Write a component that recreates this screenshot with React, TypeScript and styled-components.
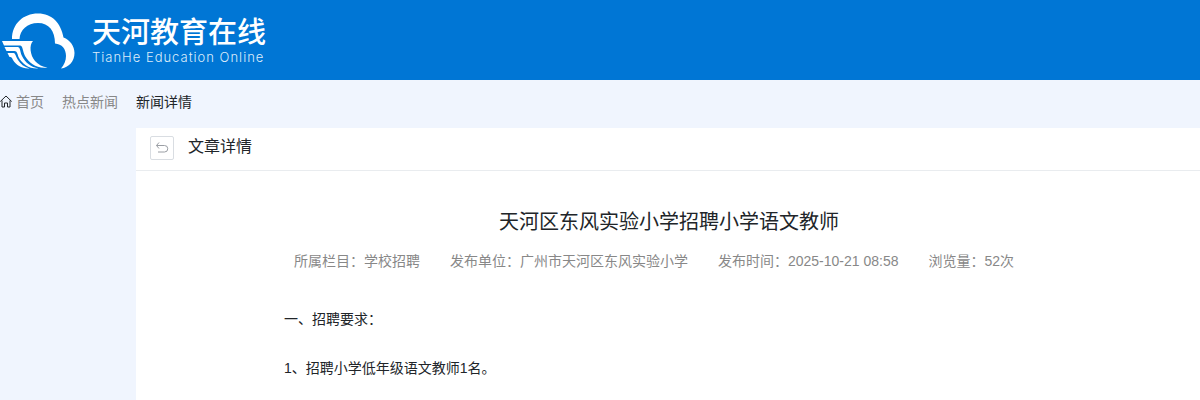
import React from "react";
import styled, { createGlobalStyle } from "styled-components";

const GlobalStyle = createGlobalStyle`
  * { box-sizing: border-box; }
  body {
    margin: 0;
    background: #f0f5fe;
    color: #212529;
    font: 14px/20px "Liberation Sans", "Noto Sans CJK SC", sans-serif;
  }
`;

const Page = styled.div`
  min-height: 100vh;
  display: flex;
  flex-direction: column;
`;

const Header = styled.header`
  height: 80px;
  display: flex;
  align-items: center;
  gap: 15px;
  background: #0076d5;
  color: #fff;
`;

const LogoMark = styled.svg`
  width: 77px;
  height: 80px;
  flex: none;
`;

const Brand = styled.div`
  display: flex;
  flex-direction: column;
  white-space: nowrap;
`;

const BrandName = styled.span`
  font-size: 29px;
  line-height: 34px;
  font-weight: 500;
`;

const BrandLatin = styled.span`
  font-family: Inter, sans-serif;
  font-size: 13px;
  line-height: 14px;
  font-weight: 300;
  letter-spacing: 1px;
  color: #dcecfa;
`;

const Breadcrumb = styled.nav`
  height: 48px;
  display: flex;
  align-items: center;
  gap: 18px;
  padding-bottom: 4px;
`;

const Crumb = styled.a<{ $current?: boolean }>`
  display: flex;
  align-items: center;
  gap: 4px;
  color: ${(p) => (p.$current ? "#212529" : "#888")};
  text-decoration: none;
`;

const HomeIcon = styled.svg`
  width: 12px;
  height: 14px;
  margin-bottom: 2px;
  color: #212529;
`;

const Card = styled.main`
  flex: 1;
  margin-left: 136px;
  background: #fff;
`;

const CardHeader = styled.div`
  height: 43px;
  display: flex;
  align-items: center;
  gap: 14px;
  padding: 0 14px 5px;
  border-bottom: 1px solid #e9ecef;
`;

const BackButton = styled.button`
  width: 24px;
  height: 24px;
  margin-top: 2px;
  display: flex;
  align-items: center;
  justify-content: center;
  padding: 0;
  border: 1px solid #d9dde2;
  border-radius: 2px;
  background: #fff;
  color: #9a9ea4;
`;

const CardTitle = styled.h2`
  margin: 0;
  font-size: 16px;
  line-height: 24px;
  font-weight: 400;
`;

const Article = styled.article`
  padding: 36px 146px 0 148px;
`;

const Title = styled.h1`
  margin: 0;
  font-size: 20px;
  line-height: 30px;
  font-weight: 400;
  text-align: center;
`;

const Meta = styled.div`
  display: flex;
  justify-content: center;
  margin-top: 14px;
  color: #888;
  white-space: nowrap;
`;

const MetaItem = styled.span`
  margin-right: 30px;
`;

const Body = styled.div`
  margin-top: 24px;
`;

const Paragraph = styled.p`
  margin: 0;
  padding: 14px 0 15px;
`;

export default function App() {
  return (
    <Page>
      <GlobalStyle />
      <Header>
        <LogoMark viewBox="0 0 77 80" fill="#fff" aria-hidden="true">
          <path d="M12 39C12 24 23 13.500 38 13.500C52 13.500 61 23 63.500 37.500C70 40 74.500 46 74.500 53C74.500 61 69 67.500 61 68.500C64 65 66 61 66 56C66 49 62 44 55 43.500C55 31 49 23 38 23C27 23 20 30 19.500 39Z" />
          <path d="M2 41H33C29 45 30 55 35 61Q40 66.500 47.500 67.500C37 69 29 63 25 56C22.500 51 23 45.500 20 45.500H4Z" />
          <path d="M4.500 47H17.500C20.500 47 20 52 22 56C25.500 63 31 67 38.500 68.500C29 69 22 64 18.500 57C17.500 54 17 51 14.500 51H6.500Z" />
          <path d="M7.500 53H13.500C15.500 53 15.500 56 18 60C20.500 64 24 67 29.500 68.500C22 69 16 65 13 60Q12 57 10.500 57H9.500Z" />
        </LogoMark>
        <Brand>
          <BrandName>天河教育在线</BrandName>
          <BrandLatin>TianHe Education Online</BrandLatin>
        </Brand>
      </Header>
      <Breadcrumb aria-label="面包屑">
        <Crumb href="#">
          <HomeIcon viewBox="0 0 12 14" fill="none" stroke="currentColor" aria-hidden="true">
            <path d="M.3 7.500L6 2L11.700 7.500M2 6.500V13H4.500V9H7.500V13H10V6.500" />
          </HomeIcon>
          首页
        </Crumb>
        <Crumb href="#">热点新闻</Crumb>
        <Crumb href="#" $current aria-current="page">新闻详情</Crumb>
      </Breadcrumb>
      <Card>
        <CardHeader>
          <BackButton type="button" aria-label="返回">
            <svg width="14" height="14" viewBox="0 0 14 14" fill="none" stroke="currentColor" aria-hidden="true">
              <path d="M4 1.500L1.500 4.500L4 7.500M1.500 4.500H9.500A3 3 0 0 1 9.500 11H3" />
            </svg>
          </BackButton>
          <CardTitle>文章详情</CardTitle>
        </CardHeader>
        <Article>
          <Title>天河区东风实验小学招聘小学语文教师</Title>
          <Meta>
            <MetaItem>所属栏目：学校招聘</MetaItem>
            <MetaItem>发布单位：广州市天河区东风实验小学</MetaItem>
            <MetaItem>发布时间：2025-10-21 08:58</MetaItem>
            <MetaItem>浏览量：52次</MetaItem>
          </Meta>
          <Body>
            <Paragraph>一、招聘要求：</Paragraph>
            <Paragraph>1、招聘小学低年级语文教师1名。</Paragraph>
          </Body>
        </Article>
      </Card>
    </Page>
  );
}
